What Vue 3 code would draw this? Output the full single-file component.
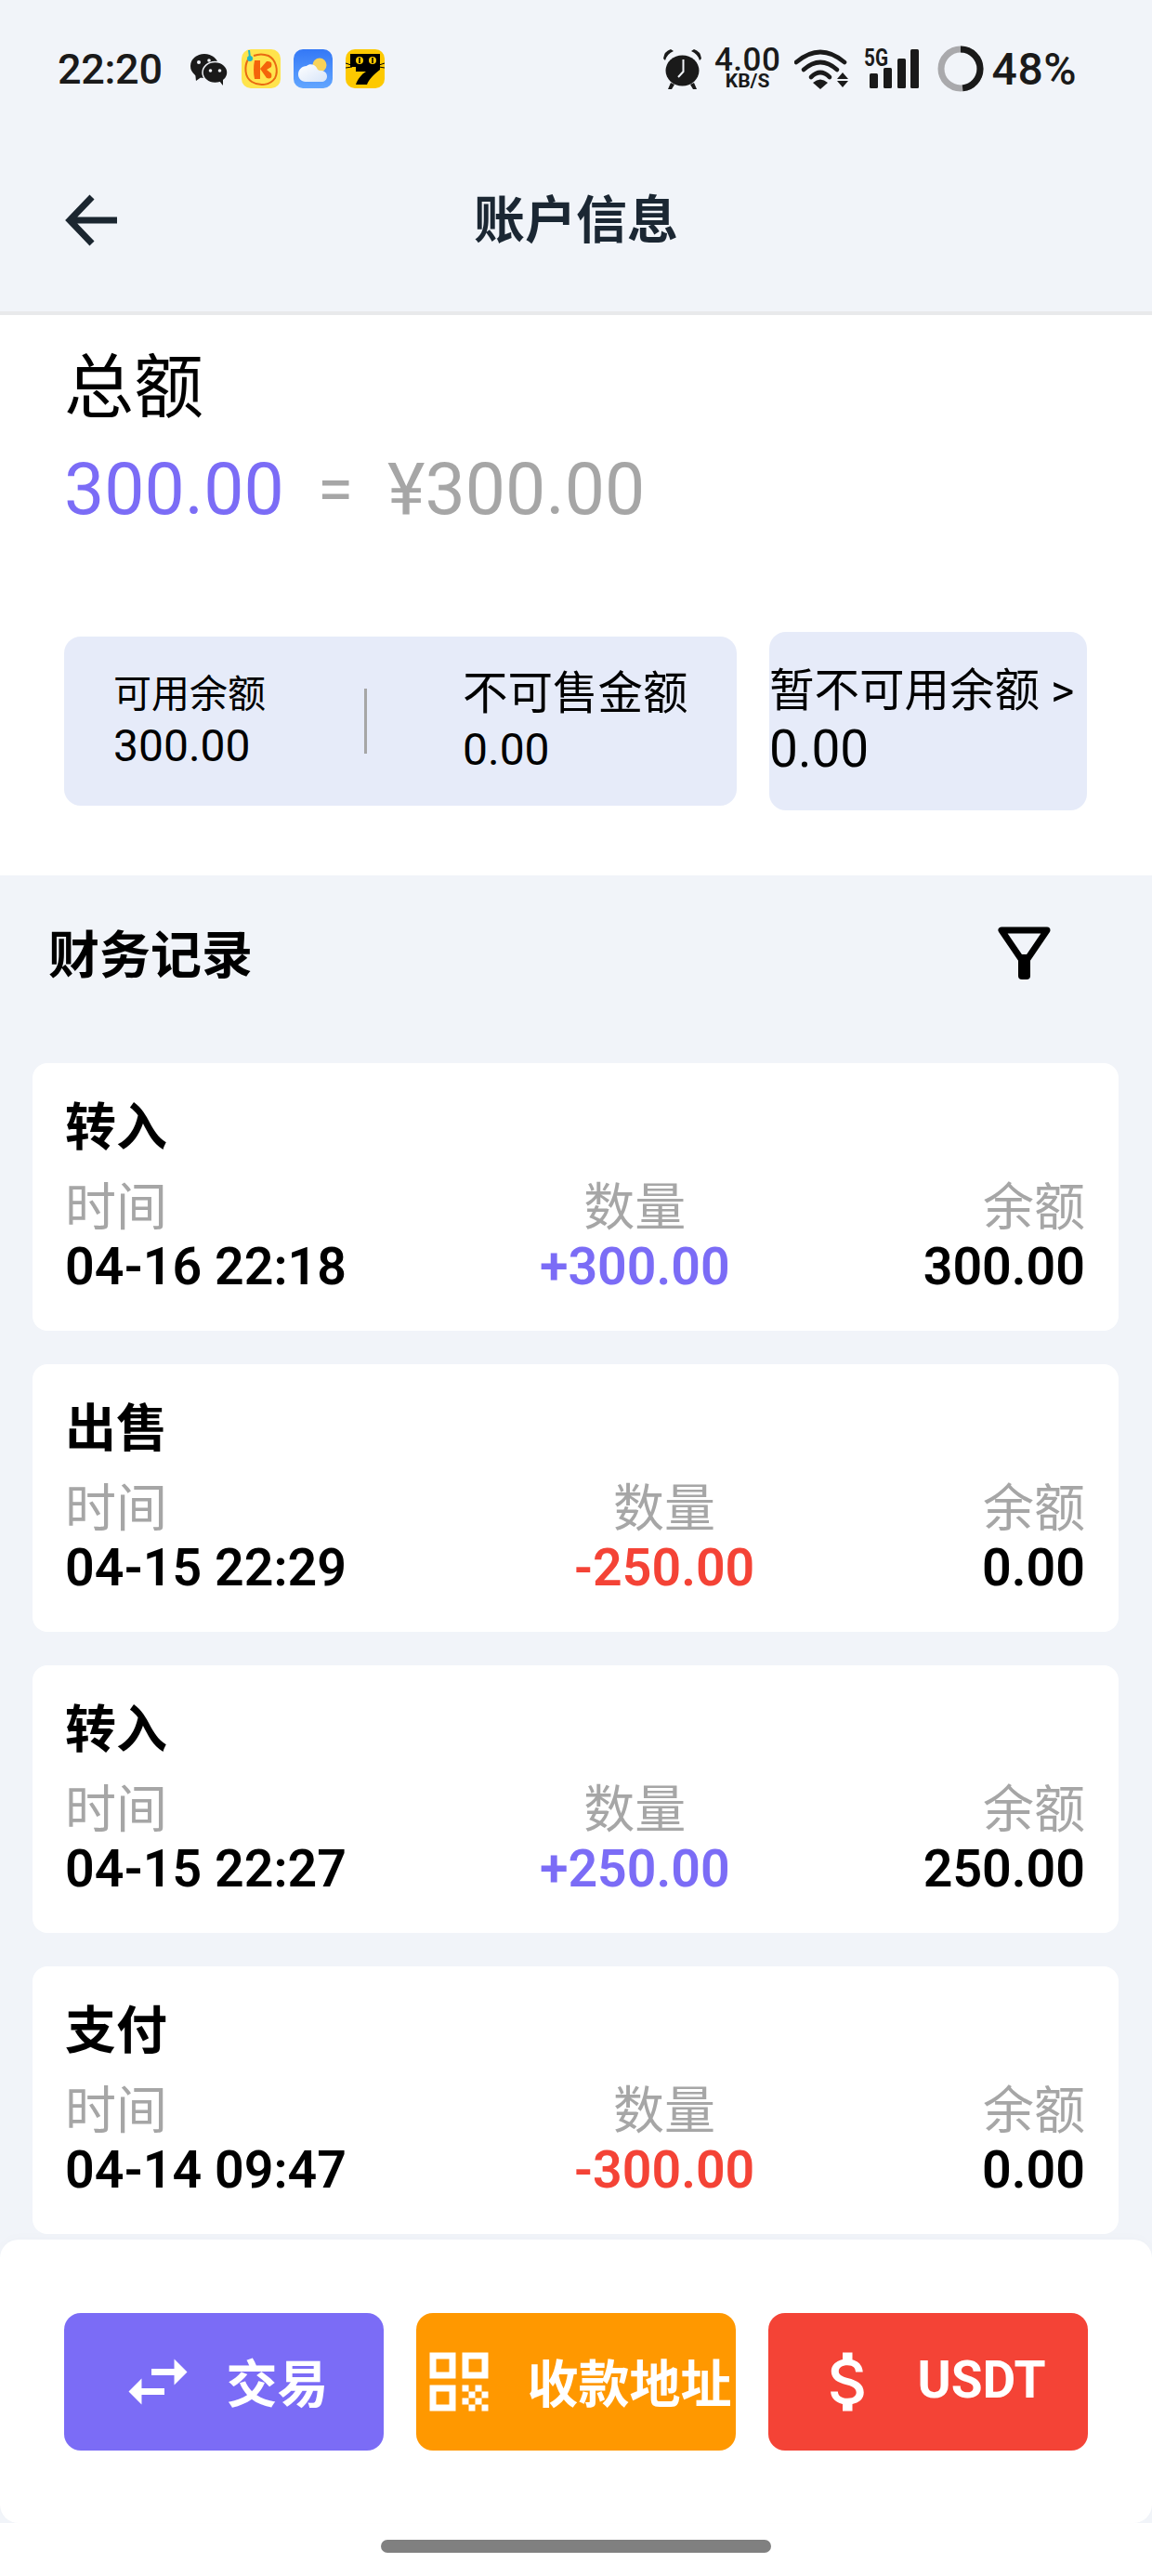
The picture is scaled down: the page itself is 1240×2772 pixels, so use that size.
<template>
  <div class="page">
    <header class="top">
      <!-- Android status bar -->
      <div class="status">
        <div class="status-left">
          <span class="clock">22:20</span>
          <svg class="ic-wechat" width="40" height="34" viewBox="0 0 40 34">
            <ellipse cx="15" cy="13" rx="15" ry="13" fill="#1a1a1a" />
            <path d="M5 20 L6 29 L13 24 Z" fill="#1a1a1a" />
            <ellipse cx="26.5" cy="20" rx="13.5" ry="11.5" fill="#1a1a1a" stroke="#f1f4f9" stroke-width="1.5" />
            <path d="M31 29 L35 34 L35 27 Z" fill="#1a1a1a" />
            <circle cx="9" cy="9" r="2" fill="#f1f4f9" />
            <circle cx="20" cy="7" r="1.8" fill="#f1f4f9" />
            <circle cx="21.5" cy="18" r="1.8" fill="#f1f4f9" />
            <circle cx="31.5" cy="18" r="1.8" fill="#f1f4f9" />
          </svg>
          <svg class="app" width="42" height="42" viewBox="0 0 42 42">
            <rect width="42" height="42" rx="10" fill="#ffe44d" />
            <path d="M7 11 C3 18 3 30 11 35 C19 40 31 39 36 31 C40 23 37 11 29 7 C24 5 18 5 13 7" fill="none" stroke="#e96a12" stroke-width="2" />
            <path d="M14 12 H20 V32 H14 Q12 22 14 12 Z" fill="#f4640b" />
            <path d="M20 21 L27 13 Q34 12 32 19 L27 22 L32 26 Q34 33 27 31 Z" fill="#f4640b" />
            <path d="M8 1 L9 9" stroke="#23b5c4" stroke-width="2" />
            <circle cx="9" cy="10" r="3" fill="#23b5c4" />
          </svg>
          <svg class="app" width="42" height="42" viewBox="0 0 42 42">
            <defs>
              <linearGradient id="sky" x1="0" y1="0" x2="0" y2="1">
                <stop offset="0" stop-color="#3478f6" />
                <stop offset="1" stop-color="#62a6ff" />
              </linearGradient>
              <linearGradient id="cloud" x1="0" y1="0" x2="1" y2="1">
                <stop offset="0" stop-color="#ffffff" />
                <stop offset="1" stop-color="#d6e4f8" />
              </linearGradient>
            </defs>
            <rect width="42" height="42" rx="10" fill="url(#sky)" />
            <circle cx="28" cy="17" r="7.5" fill="#f8d258" />
            <path d="M13 35 C8 35 5 31 5 27 C5 22 9 18 14 18 C17 15 23 16 25 20 C26 23 28 23 31 23 C34 24 36 26 36 29 C36 33 33 35 30 35 Z" fill="url(#cloud)" />
          </svg>
          <svg class="app" width="42" height="42" viewBox="0 0 42 42">
            <rect width="42" height="42" rx="10" fill="#fdc900" />
            <path d="M5 5 H37 V19 H5 Z" fill="#000" />
            <circle cx="15" cy="12" r="4" fill="#fdc900" />
            <circle cx="29" cy="12" r="4" fill="#fdc900" />
            <path d="M15 9v6M29 9v6" stroke="#000" stroke-width="1.6" />
            <path d="M11 18 H37 V22 C30 27 25 33 23 38 H11 C13 32 17 27 22 24 H11 Z" fill="#000" />
            <path d="M0 15 L6 17 M0 20 L7 19 M42 15 L36 17 M42 20 L36 19" stroke="#000" stroke-width="1" />
          </svg>
        </div>

        <div class="status-right">
          <svg width="43" height="44" viewBox="0 0 43 44">
            <ellipse cx="21.5" cy="24" rx="18" ry="16.5" fill="#1a1a1a" />
            <path d="M1 11 Q2 3 9 1 L12 3 Q5 6 3 13 Z" fill="#1a1a1a" />
            <path d="M42 11 Q41 3 34 1 L31 3 Q38 6 40 13 Z" fill="#1a1a1a" />
            <path d="M9 37 L6 44 H10 L13 39 Z M34 37 L37 44 H33 L30 39 Z" fill="#1a1a1a" />
            <path d="M22.5 12 V25 L17 31" fill="none" stroke="#f1f4f9" stroke-width="2" />
          </svg>
          <div class="net">
            <span class="net-num">4.00</span>
            <span class="net-unit">KB/S</span>
          </div>
          <svg width="58" height="44" viewBox="0 0 58 44">
            <g fill="none" stroke="#1a1a1a" stroke-width="4.6" stroke-linecap="round">
              <path d="M2 15 Q28 -7 54 15" />
              <path d="M10 23 Q28 7 46 23" />
              <path d="M18 31 Q28 21 38 31" />
            </g>
            <path d="M20 37 Q28 30 36 37 L28 44 Z" fill="#1a1a1a" />
            <path d="M52 26 L58 33 H46 Z M46 35 H58 L52 42 Z" fill="#1a1a1a" />
          </svg>
          <svg class="signal" width="59" height="42" viewBox="0 0 59 42">
            <text x="0" y="18" class="five-g" textLength="26" lengthAdjust="spacingAndGlyphs">5G</text>
            <rect x="6" y="26" width="9" height="16" rx="1.5" fill="#1a1a1a" />
            <rect x="21" y="20" width="9" height="22" rx="1.5" fill="#1a1a1a" />
            <rect x="36" y="10" width="9" height="32" rx="1.5" fill="#1a1a1a" />
            <rect x="50" y="0" width="9" height="42" rx="1.5" fill="#1a1a1a" />
          </svg>
          <svg class="ring" width="50" height="50" viewBox="0 0 50 50">
            <circle cx="25" cy="25" r="21" fill="none" stroke="#a9a9ac" stroke-width="7" />
            <circle cx="25" cy="25" r="21" fill="none" stroke="#1a1a1a" stroke-width="7"
              stroke-dasharray="63.3 132" transform="rotate(-90 25 25)" />
          </svg>
          <span class="pct">48%</span>
        </div>
      </div>

      <nav class="nav">
        <svg class="back" width="60" height="60" viewBox="0 0 60 60">
          <path d="M56 30 H6 M29 5 L5 30 L29 55" fill="none" stroke="#1b2630" stroke-width="7" />
        </svg>
        <h1 class="nav-title">账户信息</h1>
      </nav>
    </header>

    <section class="summary">
      <div class="total-label">总额</div>
      <div class="total-line">
        <span class="total-num">300.00</span>
        <span class="total-eq">=</span>
        <span class="total-cny">¥300.00</span>
      </div>
      <div class="boxes">
        <div class="box-main">
          <div class="col-a">
            <div class="lbl-sm">可用余额</div>
            <div class="val-sm">300.00</div>
          </div>
          <i class="vline"></i>
          <div class="col-b">
            <div class="lbl-md">不可售金额</div>
            <div class="val-sm">0.00</div>
          </div>
        </div>
        <div class="box-side">
          <div class="lbl-md">暂不可用余额 &gt;</div>
          <div class="val-lg">0.00</div>
        </div>
      </div>
    </section>

    <section class="records">
      <div class="rec-head">
        <h2 class="rec-title">财务记录</h2>
        <svg width="57" height="57" viewBox="0 0 57 57">
          <path d="M4 4 H53 L28.5 40 Z" fill="none" stroke="#000" stroke-width="7" stroke-linejoin="round" />
          <path d="M22 30 H35 V53 Q35 57 31 57 H26 Q22 57 22 53 Z" fill="#000" />
        </svg>
      </div>

      <div class="rec-list">
        <div v-for="r in records" :key="r.time" class="card">
          <div class="card-title">{{ r.type }}</div>
          <div class="card-row">
            <div class="cell">
              <div class="cell-lbl">时间</div>
              <div class="cell-val">{{ r.time }}</div>
            </div>
            <div class="cell cell--mid">
              <div class="cell-lbl">数量</div>
              <div class="cell-val" :class="r.amount[0] === '+' ? 'in' : 'out'">{{ r.amount }}</div>
            </div>
            <div class="cell cell--end">
              <div class="cell-lbl">余额</div>
              <div class="cell-val">{{ r.balance }}</div>
            </div>
          </div>
        </div>
      </div>

      <div class="actions">
        <button class="btn btn--violet">
          <svg width="84" height="84" viewBox="0 0 24 24" fill="#fff">
            <path d="M6.99 11L3 15l3.99 4v-3H14v-2H6.99v-3zM21 9l-3.99-4v3H10v2h7.01v3L21 9z" />
          </svg>
          <span>交易</span>
        </button>
        <button class="btn btn--orange">
          <svg width="84" height="84" viewBox="0 0 24 24" fill="#fff">
            <path d="M3 11h8V3H3v8zm2-6h4v4H5V5zM3 21h8v-8H3v8zm2-6h4v4H5v-4zM13 3v8h8V3h-8zm6 6h-4V5h4v4zM19 19h2v2h-2zM13 13h2v2h-2zM15 15h2v2h-2zM13 17h2v2h-2zM15 19h2v2h-2zM17 17h2v2h-2zM17 13h2v2h-2zM19 15h2v2h-2z" />
          </svg>
          <span>收款地址</span>
        </button>
        <button class="btn btn--red">
          <svg width="84" height="84" viewBox="0 0 24 24" fill="#fff">
            <path d="M11.8 10.9c-2.27-.59-3-1.2-3-2.15 0-1.09 1.01-1.85 2.7-1.85 1.78 0 2.44.85 2.5 2.1h2.21c-.07-1.72-1.12-3.3-3.21-3.81V3h-3v2.16c-1.94.42-3.5 1.68-3.5 3.61 0 2.31 1.91 3.46 4.7 4.13 2.5.6 3 1.48 3 2.41 0 .69-.49 1.79-2.7 1.79-2.06 0-2.87-.92-2.98-2.1h-2.2c.12 2.19 1.76 3.42 3.68 3.83V21h3v-2.15c1.95-.37 3.5-1.5 3.5-3.55 0-2.84-2.43-3.81-4.7-4.4z" />
          </svg>
          <span>USDT</span>
        </button>
      </div>
    </section>

    <div class="home-area">
      <div class="home-pill"></div>
    </div>
  </div>
</template>

<script setup>
const records = [
  { type: '转入', time: '04-16 22:18', amount: '+300.00', balance: '300.00' },
  { type: '出售', time: '04-15 22:29', amount: '-250.00', balance: '0.00' },
  { type: '转入', time: '04-15 22:27', amount: '+250.00', balance: '250.00' },
  { type: '支付', time: '04-14 09:47', amount: '-300.00', balance: '0.00' }
]
</script>

<style>
html, body { background: #fff; }
</style>

<style scoped>
.page {
  width: 1240px;
  height: 2772px;
  overflow: hidden;
  background: #fff;
  font-family: Roboto, "Noto Sans CJK SC", sans-serif;
  color: #000;
}

/* Header */
.top {
  background: #f1f4f9;
  border-bottom: 4px solid #e8e9eb;
}
.status {
  height: 148px;
  padding: 0 81px 0 62px;
  display: flex;
  align-items: center;
  justify-content: space-between;
  color: #1a1a1a;
}
.status-left, .status-right {
  display: flex;
  align-items: center;
}
.clock {
  font-size: 45px;
  font-weight: 500;
  width: 112px;
  letter-spacing: -0.3px;
}
.ic-wechat { margin: 2px 15px 0 31px; }
.app { margin-right: 14px; }
.app:last-child { margin-right: 0; }
.status-right svg { flex: none; }
.net {
  width: 70px;
  margin: 0 15px 0 14px;
  display: flex;
  flex-direction: column;
  align-items: center;
  font-weight: 500;
}
.net-num { font-size: 35px; line-height: 26px; letter-spacing: 0.5px; }
.net-unit { font-size: 21px; line-height: 18px; font-weight: 700; }
.five-g {
  font-family: Roboto, sans-serif;
  font-size: 25px;
  font-weight: 700;
  fill: #1a1a1a;
}
.signal { margin-left: 17px; overflow: visible; }
.ring { margin-left: 20px; }
.pct {
  margin-left: 9px;
  font-size: 48px;
  font-weight: 500;
  letter-spacing: 0.5px;
}

.nav {
  height: 187px;
  padding: 0 0 9px 70px;
  box-sizing: border-box;
  display: flex;
  align-items: center;
  position: relative;
}
.nav-title {
  position: absolute;
  left: 0;
  right: 0;
  margin: 0;
  text-align: center;
  font-size: 55px;
  font-weight: 700;
  color: #1b2733;
  padding-bottom: 11px;
}

/* Summary */
.summary {
  height: 603px;
  box-sizing: border-box;
  padding-top: 24px;
}
.total-label {
  padding-left: 69px;
  font-size: 75px;
  line-height: 108px;
}
.total-line {
  padding-left: 69px;
  font-size: 77px;
  line-height: 113px;
  display: flex;
  align-items: center;
}
.total-num { color: #7b6cf6; }
.total-eq { color: #a6a6a6; font-size: 70px; margin: 0 37px 0 36px; }
.total-cny { color: #a6a6a6; }
.boxes {
  display: flex;
  align-items: center;
  gap: 35px;
  margin: 96px 70px 0 69px;
}
.box-main {
  width: 724px;
  height: 182px;
  flex: none;
  box-sizing: border-box;
  padding-left: 53px;
  background: #e6ebf9;
  border-radius: 18px;
  display: flex;
  align-items: center;
}
.col-a { width: 270px; }
.col-b { margin-left: 103px; }
.vline {
  width: 3px;
  height: 70px;
  background: #a6a6a6;
}
.lbl-sm { font-size: 41px; line-height: 54px; }
.lbl-md { font-size: 48.5px; line-height: 62px; white-space: nowrap; }
.val-sm { font-size: 48px; line-height: 58px; }
.val-lg { font-size: 55px; line-height: 62px; }
.box-side {
  flex: 1;
  height: 192px;
  box-sizing: border-box;
  padding: 33px 0 0 0;
  background: #e6ebf9;
  border-radius: 18px;
}

/* Records */
.records {
  height: 1773px;
  background: #f1f4f9;
}
.rec-head {
  height: 168px;
  padding: 30px 109px 0 52px;
  box-sizing: border-box;
  display: flex;
  justify-content: space-between;
  align-items: flex-start;
}
.rec-head svg { margin-top: 25px; }
.rec-title {
  margin: 0;
  font-size: 55px;
  line-height: 112px;
  font-weight: 700;
}
.rec-list {
  display: flex;
  flex-direction: column;
  gap: 36px;
  padding: 34px 36px 0 35px;
}
.card {
  height: 288px;
  box-sizing: border-box;
  padding: 32px 36px 0 35px;
  background: #fff;
  border-radius: 16px;
}
.card-title {
  font-size: 55px;
  line-height: 74px;
  font-weight: 700;
}
.card-row {
  margin-top: 16px;
  display: flex;
  justify-content: space-between;
}
.cell { display: flex; flex-direction: column; }
.cell--mid { align-items: center; }
.cell--end { align-items: flex-end; }
.cell-lbl {
  font-size: 55px;
  line-height: 66px;
  color: #a6a6a6;
}
.cell-val {
  font-size: 55.5px;
  line-height: 64px;
  font-weight: 600;
}
.in { color: #7b6cf6; }
.out { color: #f44336; }

/* Bottom actions */
.actions {
  margin-top: 6px;
  height: 305px;
  box-sizing: border-box;
  padding: 79px 69px 0;
  background: #fff;
  border-radius: 20px;
  box-shadow: 0 -3px 12px rgba(0, 0, 0, 0.015);
  display: flex;
  gap: 35px;
}
.btn {
  flex: 1;
  height: 148px;
  padding: 0;
  border: 0;
  border-radius: 18px;
  color: #fff;
  font-family: inherit;
  font-size: 55px;
  font-weight: 700;
  display: flex;
  align-items: center;
  justify-content: center;
  gap: 31px;
}
.btn span { white-space: nowrap; margin-bottom: 4px; }
.btn svg { flex: none; }
.btn--violet { background: #7b6cf6; }
.btn--orange { background: #ff9800; }
.btn--red { background: #f44336; }

.home-area {
  height: 57px;
  display: flex;
  justify-content: center;
  padding-top: 18px;
  box-sizing: border-box;
}
.home-pill {
  width: 420px;
  height: 14px;
  border-radius: 7px;
  background: #808080;
}
</style>
